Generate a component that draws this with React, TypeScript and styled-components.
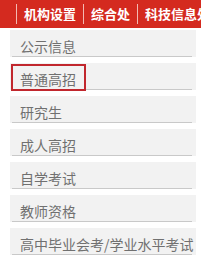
import { createGlobalStyle, styled } from "styled-components";

const navItems = ["机构设置", "综合处", "科技信息处"];
const menuItems = [
  "公示信息",
  "普通高招",
  "研究生",
  "成人高招",
  "自学考试",
  "教师资格",
  "高中毕业会考/学业水平考试",
];

export default function App() {
  return (
    <Page>
      <GlobalStyle />
      <NavBar>
        {navItems.map((item) => (
          <NavItem key={item}>{item}</NavItem>
        ))}
      </NavBar>
      <Menu>
        {menuItems.map((item) => (
          <MenuItem key={item}>
            <MenuLabel $active={item === "普通高招"}>{item}</MenuLabel>
          </MenuItem>
        ))}
      </Menu>
    </Page>
  );
}

const GlobalStyle = createGlobalStyle`
  body {
    margin: 0;
    background: #fff;
    font-family: "Noto Sans CJK SC", "Noto Sans", sans-serif;
  }
`;

const Page = styled.div`
  width: 201px;
  height: 264px;
  overflow: hidden;
`;

const NavBar = styled.nav`
  display: flex;
  align-items: center;
  height: 28px;
  padding-left: 16px;
  background: #d42a1f;
  white-space: nowrap;
  overflow: hidden;
`;

const NavItem = styled.span`
  display: block;
  flex-shrink: 0;
  padding: 0 7px;
  border-left: 1px solid #f3b9b2;
  color: #fff;
  font-size: 13px;
  font-weight: bold;
  line-height: 20px;
`;

const Menu = styled.ul`
  list-style: none;
  margin: 0;
  padding: 2px 5px 0 10px;
  display: flex;
  flex-direction: column;
  gap: 6px;
  background: #fff;
`;

const MenuItem = styled.li`
  background: #f2f2f2;
  padding: 0 4px 0 2px;
`;

const MenuLabel = styled.div<{ $active?: boolean }>`
  position: relative;
  padding: 7px 0 0 8px;
  height: 19px;
  border-bottom: 1px solid #c9c9c9;
  color: #707070;
  font-size: 14px;
  line-height: 18px;
  white-space: nowrap;

  &::after {
    content: "";
    display: ${({ $active }) => ($active ? "block" : "none")};
    position: absolute;
    left: -1px;
    top: 1px;
    width: 71px;
    height: 23px;
    border: 2px solid #c1272d;
  }
`;
